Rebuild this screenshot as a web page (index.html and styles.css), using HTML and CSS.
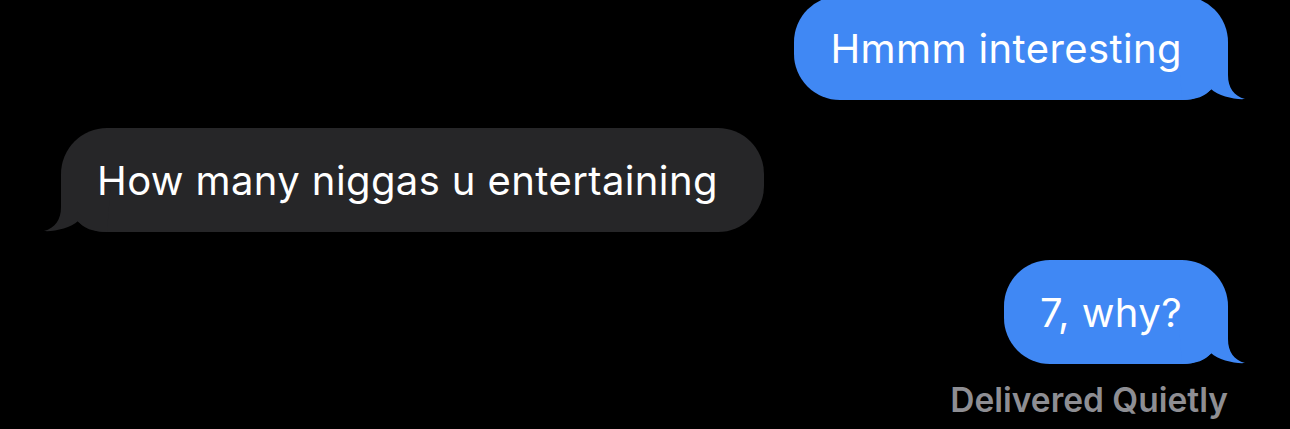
FILE: index.html
```html
<!DOCTYPE html>
<html lang="en">
<head>
    <meta charset="UTF-8">
    <meta name="viewport" content="width=device-width, initial-scale=1.0">
    <title>Messages</title>
    <link rel="stylesheet" href="styles.css">
</head>
<body>

    <div class="thread">
        <div class="msg sent">
            <span>Hmmm interesting</span>
            <svg class="tail" viewBox="-50 -52 70 52"><path d="M-50 -52 H0 V-25 C0 -12 6 -4 17 -1 C8 0 -10 -4 -17 -11 C-22 -4 -32 0 -46 0 Z"/></svg>
        </div>
        <div class="msg received">
            <span>How many niggas u entertaining</span>
            <svg class="tail" viewBox="-50 -52 70 52"><path d="M-50 -52 H0 V-25 C0 -12 6 -4 17 -1 C8 0 -10 -4 -17 -11 C-22 -4 -32 0 -46 0 Z"/></svg>
        </div>
        <div class="msg sent">
            <span>7, why?</span>
            <svg class="tail" viewBox="-50 -52 70 52"><path d="M-50 -52 H0 V-25 C0 -12 6 -4 17 -1 C8 0 -10 -4 -17 -11 C-22 -4 -32 0 -46 0 Z"/></svg>
        </div>
        <div class="status">Delivered Quietly</div>
    </div>

</body>
</html>
```

FILE: styles.css
```css
body {
    margin: 0;
    background: #000;
    font-family: Inter, "Open Sans", sans-serif;
    overflow: hidden;
}

.thread {
    display: flex;
    flex-direction: column;
    padding: 0 62px 0 61px;
    margin-top: -32px;
}

.msg {
    position: relative;
    display: flex;
    align-items: center;
    height: 104px;
    margin-top: 28px;
    padding: 0 46px 0 36px;
    border-radius: 46px;
    font-size: 40px;
    letter-spacing: 0.4px;
    color: #fff;
}

.msg span {
    position: relative;
    z-index: 1;
}

.sent {
    align-self: flex-end;
    background: #4088f4;
}

.received {
    align-self: flex-start;
    background: #262628;
}

/* the little hook at the bottom corner */
.tail {
    position: absolute;
    bottom: 0;
    width: 70px;
    height: 52px;
}

.sent .tail {
    right: -20px;
    fill: #4088f4;
}

.received .tail {
    left: -20px;
    fill: #262628;
    transform: scaleX(-1);
}

.status {
    align-self: flex-end;
    margin-top: 16px;
    font-size: 33.5px;
    line-height: 40px;
    font-weight: 600;
    color: #8e8e93;
}
```
